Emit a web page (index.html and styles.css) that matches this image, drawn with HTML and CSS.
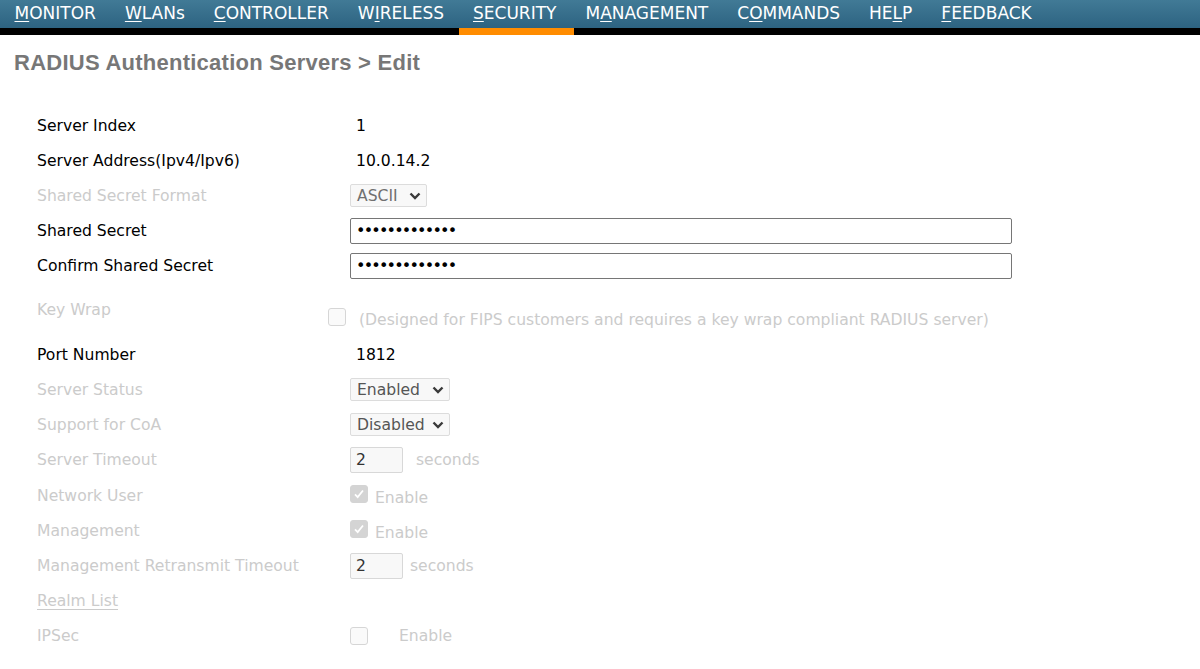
FILE: index.html
```html
<!DOCTYPE html>
<html>
<head>
<meta charset="utf-8">
<link rel="stylesheet" href="styles.css">
</head>
<body>
<nav class="nav">
  <a class="nav-item"><u>M</u>ONITOR</a>
  <a class="nav-item"><u>W</u>LANs</a>
  <a class="nav-item"><u>C</u>ONTROLLER</a>
  <a class="nav-item">W<u>I</u>RELESS</a>
  <a class="nav-item active"><u>S</u>ECURITY</a>
  <a class="nav-item">M<u>A</u>NAGEMENT</a>
  <a class="nav-item">C<u>O</u>MMANDS</a>
  <a class="nav-item">HE<u>L</u>P</a>
  <a class="nav-item"><u>F</u>EEDBACK</a>
</nav>
<h1 class="title">RADIUS Authentication Servers &gt; Edit</h1>
<div class="form">
  <div class="row"><div class="label">Server Index</div><div class="value text">1</div></div>
  <div class="row"><div class="label">Server Address(Ipv4/Ipv6)</div><div class="value text">10.0.14.2</div></div>
  <div class="row"><div class="label dim">Shared Secret Format</div><div class="value"><span class="select sel-ascii">ASCII <svg class="chev" viewBox="0 0 12 8"><path d="M1.5 1.5 L6 6 L10.5 1.5" fill="none" stroke="#3a3a3a" stroke-width="2.4"/></svg></span></div></div>
  <div class="row"><div class="label">Shared Secret</div><div class="value"><span class="pwd">•••••••••••••</span></div></div>
  <div class="row"><div class="label">Confirm Shared Secret</div><div class="value"><span class="pwd">•••••••••••••</span></div></div>
  <div class="row row-key"><div class="label dim">Key Wrap</div><div class="value keywrap"><span class="cb"></span><span class="dim">(Designed for FIPS customers and requires a key wrap compliant RADIUS server)</span></div></div>
  <div class="row"><div class="label">Port Number</div><div class="value text">1812</div></div>
  <div class="row"><div class="label dim">Server Status</div><div class="value"><span class="select sel-wide">Enabled <svg class="chev" viewBox="0 0 12 8"><path d="M1.5 1.5 L6 6 L10.5 1.5" fill="none" stroke="#3a3a3a" stroke-width="2.4"/></svg></span></div></div>
  <div class="row"><div class="label dim">Support for CoA</div><div class="value"><span class="select sel-wide">Disabled <svg class="chev" viewBox="0 0 12 8"><path d="M1.5 1.5 L6 6 L10.5 1.5" fill="none" stroke="#3a3a3a" stroke-width="2.4"/></svg></span></div></div>
  <div class="row row-tall"><div class="label dim">Server Timeout</div><div class="value"><span class="num">2</span><span class="dim unit">seconds</span></div></div>
  <div class="row"><div class="label dim">Network User</div><div class="value"><span class="cb checked"><svg viewBox="0 0 18 18"><path d="M4.5 9.5 L7.5 12.5 L13.5 5" fill="none" stroke="#fff" stroke-width="2"/></svg></span><span class="dim en">Enable</span></div></div>
  <div class="row"><div class="label dim">Management</div><div class="value"><span class="cb checked"><svg viewBox="0 0 18 18"><path d="M4.5 9.5 L7.5 12.5 L13.5 5" fill="none" stroke="#fff" stroke-width="2"/></svg></span><span class="dim en">Enable</span></div></div>
  <div class="row"><div class="label dim">Management Retransmit Timeout</div><div class="value"><span class="num">2</span><span class="dim unit2">seconds</span></div></div>
  <div class="row"><div class="label dim link">Realm List</div><div class="value"></div></div>
  <div class="row"><div class="label dim">IPSec</div><div class="value"><span class="cb"></span><span class="dim en2">Enable</span></div></div>
</div>
</body>
</html>
```
FILE: styles.css
```css
html, body {
  margin: 0;
  padding: 0;
  background: #fff;
  font-family: "DejaVu Sans", Verdana, sans-serif;
}
.nav {
  display: flex;
  height: 35px;
  box-sizing: border-box;
  background: linear-gradient(#417a96, #2d6381) 0 0 / 100% 28px no-repeat, #000;
}
.nav-item {
  color: #fff;
  font-size: 17px;
  line-height: 26px;
  height: 35px;
  box-sizing: border-box;
  padding: 0 14.5px;
  border-bottom: 7px solid transparent;
}
.nav-item.active {
  padding-right: 17.5px;
  margin-right: -3px;
  border-bottom-color: #ff8c00;
}
.nav-item u {
  text-decoration-thickness: 1px;
  text-underline-offset: 2px;
}
.title {
  margin: 15px 0 0 14px;
  font-family: "Liberation Sans", Arial, sans-serif;
  font-size: 22px;
  font-weight: bold;
  color: #777;
  letter-spacing: 0.25px;
  height: 26px;
  line-height: 26px;
}
.form {
  margin-top: 32px;
  padding-left: 37px;
  display: flex;
  flex-direction: column;
  font-size: 15.6px;
  color: #000;
}
.row {
  display: flex;
  align-items: center;
  height: 35px;
}
.row-key {
  height: 54px;
}
.row-tall {
  height: 36px;
}
.label {
  width: 313px;
  flex: none;
}
.dim {
  color: #cbcbcb;
}
.link {
  text-decoration: underline;
  text-underline-offset: 3px;
}
.value {
  display: flex;
  align-items: center;
}
.value.text {
  padding-left: 6px;
}
.select {
  display: inline-flex;
  align-items: center;
  justify-content: space-between;
  height: 23px;
  box-sizing: border-box;
  border: 1px solid #dcdcdc;
  border-radius: 2px;
  background: #f8f8f8;
  padding: 0 5px 0 6px;
  color: #555;
}
.sel-ascii { width: 77px; color: #707070; }
.sel-wide { width: 100px; }
.chev {
  width: 12px;
  height: 8px;
}
.pwd {
  display: inline-block;
  width: 662px;
  height: 26px;
  box-sizing: border-box;
  border: 1px solid #767676;
  border-radius: 2px;
  padding-left: 5px;
  font-size: 16px;
  letter-spacing: -1.8px;
  line-height: 24px;
  color: #000;
}
.keywrap {
  margin-left: -22px;
  margin-top: 20px;
}
.keywrap .cb {
  margin-right: 13px;
  margin-bottom: 7px;
}
.cb {
  display: inline-flex;
  flex: none;
  width: 18px;
  height: 18px;
  box-sizing: border-box;
  border: 1px solid #d6d6d6;
  border-radius: 3px;
  background: #fafafa;
}
.cb.checked {
  background: #d4d4d4;
  border-color: #d4d4d4;
  margin-bottom: 4px;
}
.cb svg {
  width: 16px;
  height: 16px;
}
.num {
  display: inline-block;
  width: 53px;
  height: 26px;
  box-sizing: border-box;
  border: 1px solid #d8d8d8;
  border-radius: 2px;
  background: #f8f8f8;
  padding-left: 5px;
  line-height: 24px;
  color: #333;
}
.unit { margin-left: 13px; }
.unit2 { margin-left: 7px; }
.en { margin-left: 7px; margin-top: 4px; }
.en2 { margin-left: 31px; }
```
